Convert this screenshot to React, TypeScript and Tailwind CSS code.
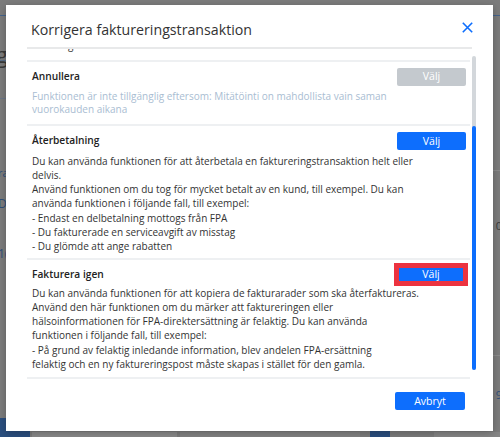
import React from "react";

const font = { fontFamily: '"Open Sans", "Noto Sans", sans-serif' };

function Btn({ children, disabled }: { children: React.ReactNode; disabled?: boolean }) {
  return (
    <div
      className={
        "w-[69px] h-[18px] rounded-[2px] flex items-center justify-center text-white text-[10.5px] leading-none " +
        (disabled ? "bg-[#c4c9ce]" : "bg-[#0d6efd]")
      }
    >
      {children}
    </div>
  );
}

function Lines({ lines, cls }: { lines: string[]; cls: string }) {
  return (
    <div className={cls}>
      {lines.map((l, i) => (
        <div key={i} className="whitespace-nowrap">
          {l}
        </div>
      ))}
    </div>
  );
}

export default function App() {
  return (
    <div className="relative w-[500px] h-[437px] bg-[#7c7c7c] overflow-hidden" style={font}>
      {/* faint page behind overlay */}
      <div className="absolute left-0 top-[15px] w-[8px] h-[1px] bg-[#45648c]" />
      <div className="absolute left-[-4px] top-[38px] text-[22px] text-[#3a3a3a]">g</div>
      <div className="absolute left-0 top-[60px] w-[6px] h-[1px] bg-[#5a6f8a]" />
      <div className="absolute left-0 top-[98px] w-[6px] h-[1px] bg-[#6b7788]" />
      <div className="absolute left-[-2px] top-[165px] text-[11px] text-[#2f4f7a]">ra</div>
      <div className="absolute left-[-2px] top-[195px] text-[12px] text-[#2f4f7a]">Dr</div>
      <div className="absolute left-[-2px] top-[245px] text-[12px] text-[#2f4f7a]">1(</div>
      <div className="absolute left-0 top-[418px] w-[30px] h-[19px] bg-[#2b4f7f]" />
      <div className="absolute left-[32px] top-[432px] w-[145px] h-[5px] bg-[#8a8a8a]" />
      <div className="absolute left-[180px] top-[432px] w-[180px] h-[5px] bg-[#838383]" />
      <div className="absolute left-[370px] top-[428px] w-[20px] h-[9px] bg-[#2b4f7f]" />
      <div className="absolute left-[434px] top-[432px] w-[66px] h-[5px] bg-[#868686]" />
      <div className="absolute right-0 top-[15px] w-[8px] h-[1px] bg-[#45648c]" />
      <div className="absolute right-0 top-[170px] w-[8px] h-[1px] bg-[#8c8c8c]" />
      <div className="absolute right-0 top-[355px] w-[8px] h-[1px] bg-[#8c8c8c]" />
      <div className="absolute right-[-2px] top-[218px] text-[11px] text-[#3a3a3a]">0</div>
      <div className="absolute right-[-2px] top-[387px] text-[11px] text-[#2f4f7a]">9</div>

      {/* modal */}
      <div className="absolute left-[6px] top-[5px] w-[487px] h-[426px] bg-white flex flex-col shadow-[0_2px_8px_rgba(0,0,0,0.25)]">
        <div className="relative h-[44px] mx-[21px] border-b-2 border-[#e8e9ea] flex items-end pb-[5px]">
          <div className="pl-[4px] text-[14.2px] leading-[24px] text-[#333333] whitespace-nowrap">
            Korrigera faktureringstransaktion
          </div>
          <svg
            className="absolute right-[-1px] top-[17px]"
            width="11"
            height="11"
            viewBox="0 0 11 11"
            fill="none"
            stroke="#0d6efd"
            strokeWidth="1.6"
          >
            <path d="M0.8 0.8 L10.2 10.2 M10.2 0.8 L0.8 10.2" />
          </svg>
        </div>

        <div className="flex h-[332px] ml-[21px] mr-[17px]">
          <div className="w-[443px] overflow-hidden">
            <div className="mt-[-11px] text-[10px] text-[#333333]">
              <div className="px-[5px] leading-[14px] h-[22px]">- Felaktigt förfallodatum</div>
              <div className="h-[2px] bg-[#eef0f2]" />

              <div className="pl-[5px] pr-[4px] pt-[6px] pb-[8px]">
                <div className="flex items-center justify-between h-[17px]">
                  <div className="text-[10.2px] font-semibold text-[#222222]">Annullera</div>
                  <Btn disabled>Välj</Btn>
                </div>
                <Lines
                  cls="mt-[5px] leading-[13px] text-[#a9bdd2]"
                  lines={[
                    "Funktionen är inte tillgänglig eftersom: Mitätöinti on mahdollista vain saman",
                    "vuorokauden aikana",
                  ]}
                />
              </div>
              <div className="h-[2px] bg-[#eef0f2]" />

              <div className="pl-[5px] pr-[4px] pt-[6px] pb-[5px]">
                <div className="flex items-center justify-between h-[18px]">
                  <div className="text-[10.2px] font-semibold text-[#222222]">Återbetalning</div>
                  <Btn>Välj</Btn>
                </div>
                <Lines
                  cls="mt-[4px] leading-[14px]"
                  lines={[
                    "Du kan använda funktionen för att återbetala en faktureringstransaktion helt eller",
                    "delvis.",
                    "Använd funktionen om du tog för mycket betalt av en kund, till exempel. Du kan",
                    "använda funktionen i följande fall, till exempel:",
                  ]}
                />
                <Lines
                  cls="mt-[1px] leading-[14px]"
                  lines={[
                    "- Endast en delbetalning mottogs från FPA",
                    "- Du fakturerade en serviceavgift av misstag",
                    "- Du glömde att ange rabatten",
                  ]}
                />
              </div>
              <div className="h-[2px] bg-[#eef0f2]" />

              <div className="pl-[5px] pr-[2px] pt-[3px] pb-[6px]">
                <div className="flex items-center justify-between h-[23px]">
                  <div className="text-[10.2px] font-semibold text-[#222222]">Fakturera igen</div>
                  <div className="w-[74px] h-[23px] border-[5px] border-[#ec3340] bg-[#0d6efd] flex items-center justify-center text-white text-[10.5px] leading-none">
                    Välj
                  </div>
                </div>
                <Lines
                  cls="leading-[14px]"
                  lines={[
                    "Du kan använda funktionen för att kopiera de fakturarader som ska återfaktureras.",
                    "Använd den här funktionen om du märker att faktureringen eller",
                    "hälsoinformationen för FPA-direktersättning är felaktig. Du kan använda",
                    "funktionen i följande fall, till exempel:",
                  ]}
                />
                <Lines
                  cls="mt-[1px] leading-[14px]"
                  lines={[
                    "- På grund av felaktig inledande information, blev andelen FPA-ersättning",
                    "felaktig och en ny faktureringspost måste skapas i stället för den gamla.",
                  ]}
                />
              </div>
              <div className="h-[2px] bg-[#eef0f2]" />
            </div>
          </div>
          {/* scrollbar */}
          <div className="ml-[2px] w-[4px] relative">
            <div className="absolute left-0 top-[7px] w-[4px] h-[314px] rounded-full bg-[#d3d7db]" />
            <div className="absolute left-0 top-[77px] w-[4px] h-[244px] rounded-full bg-[#0d6efd]" />
          </div>
        </div>

        <div className="flex justify-end mr-[28px] mt-[11px]">
          <div className="w-[70px] h-[18px] rounded-[2px] bg-[#0d6efd] flex items-center justify-center text-white text-[10.5px] leading-none">
            Avbryt
          </div>
        </div>
      </div>
    </div>
  );
}
